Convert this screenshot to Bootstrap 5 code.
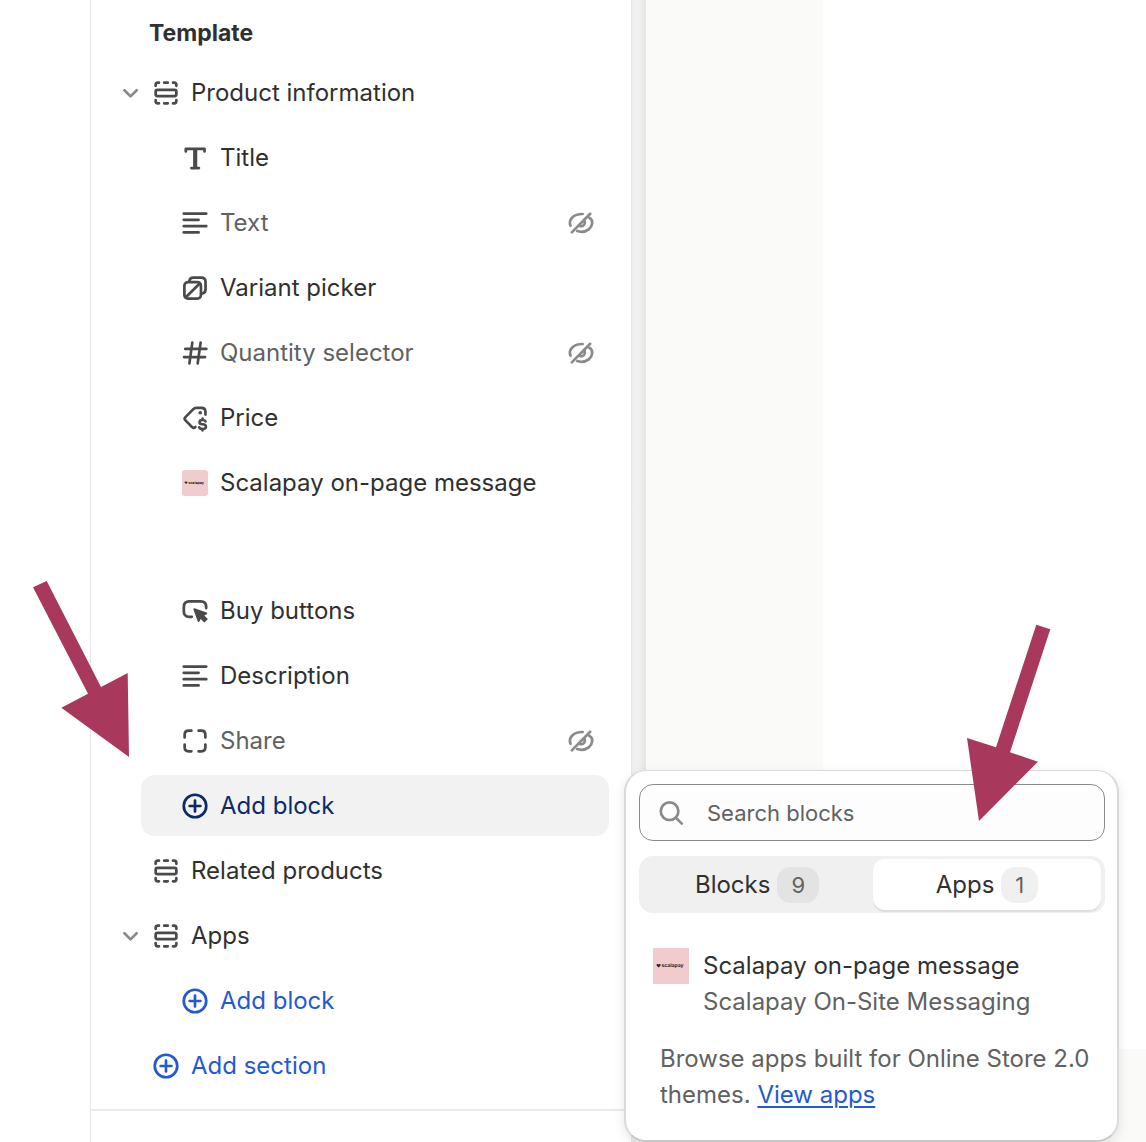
<!DOCTYPE html>
<html lang="en">
<head>
<meta charset="utf-8">
<meta name="viewport" content="width=device-width, initial-scale=1">
<title>Theme editor</title>
<link href="https://cdn.jsdelivr.net/npm/bootstrap@5.3.0/dist/css/bootstrap.min.css" rel="stylesheet">
<style>
  body { font-family: Inter, "Liberation Sans", sans-serif; font-size: 24px; line-height: 36px; color: #303030; background: #fff; }
  .editor { min-height: 100vh; }
  .rail { width: 90px; }
  .sidebar { width: 541px; border-left: 1px solid #e6e6e6; }
  .gutter { width: 15px; background: linear-gradient(90deg, #e6e6e6 0, #f0f0f0 2px, #f0f0f0 8px, #e4e4e4 100%); }
  .preview { background: #fafaf8; padding-left: 177px; }
  .preview-page { background: #fff; height: 1049px; }
  .tree { padding: 15px 22px 9px 21px; }
  .tree h2 { font-size: 23px; line-height: 36px; font-weight: 650; margin: 0 0 11px; padding-left: 37px; }
  .tree ul { margin: 0; padding: 0; list-style: none; }
  .tree-row { display: flex; align-items: center; height: 61px; margin-bottom: 4px; border-radius: 14px; }
  .tree-row button, .tab-item { border: 0; background: none; padding: 0; color: inherit; }
  .tree-row .entry { display: flex; align-items: center; gap: 7px; text-align: left; }
  .no-toggle { padding-left: 36px; }
  .child-row { margin-left: 29px; padding: 0 10px 0 36px; }
  .after-gap { margin-top: 67px; }
  .hidden-row { color: #616161; }
  .selected-row { background: #f2f2f2; }
  .ico { width: 36px; height: 36px; flex: none; display: block; fill: none; stroke: #4a4a4a; stroke-width: 1.5; stroke-linecap: round; stroke-linejoin: round; }
  .ico-soft { stroke: #8a8a8a; }
  .tree-row .add-link { color: #2459d3; }
  .selected-row .add-link { color: #0b2a66; }
  .add-link .ico { stroke: currentColor; }
  .app-logo { width: 36px; height: 36px; flex: none; display: block; }
  .app-logo-sm { width: 26px; height: 26px; margin: 0 5px; border-radius: 3px; }
  .divider { border-top: 2px solid #ebebeb; }
  .picker { left: 624px; top: 770px; width: 495px; padding: 12px 12px 27px 13px; background: #fff; border: 2px solid #dadada; border-top-width: 1px; border-bottom-color: #c8c8c8; border-radius: 22px; box-shadow: 0 4px 12px rgba(0,0,0,.1); }
  .picker-search { height: 57px; margin-top: 1px; padding: 0 13px; gap: 18px; border: 1px solid #8a8a8a; border-radius: 14px; background: #fdfdfd; }
  .picker-search input { border: 0; outline: 0; background: none; min-width: 0; padding: 0; font-size: 22px; color: #303030; }
  .picker-search input::placeholder { color: #616161; opacity: 1; }
  .tab-strip { margin-top: 15px; padding: 3px 4px; gap: 2px; background: #f0f0f0; border-radius: 14px; }
  .tab-item { flex: 1 1 0; height: 51px; display: flex; align-items: center; justify-content: center; gap: 7px; border-radius: 12px; }
  .tab-on { background: #fff; box-shadow: 0 2px 1px rgba(0,0,0,.08); }
  .tally { height: 36px; padding: 0 14px; border-radius: 14px; background: #e3e3e3; color: #616161; font-size: 22px; }
  .tab-on .tally { background: #f0f0f0; }
  .app-entry { margin: 35px 0 0 14px; gap: 14px; }
  .soft { color: #616161; }
  .browse { margin: 21px 0 0 21px; }
  .browse a { color: #2459d3; text-underline-offset: 3px; text-decoration-thickness: 2px; }
  .pointers { left: 0; top: 0; width: 1146px; height: 1142px; pointer-events: none; fill: #a9395c; }
</style>
<script src="https://cdn.jsdelivr.net/npm/bootstrap@5.3.0/dist/js/bootstrap.bundle.min.js"></script>
</head>
<body>
<svg class="d-none" aria-hidden="true">
  <symbol id="i-chevron" viewBox="0 0 20 20"><path d="M6.9 8.5l3.4 3.4 3.4-3.4"/></symbol>
  <symbol id="i-section" viewBox="0 0 20 20"><rect x="4.25" y="8.25" width="11.5" height="3.5" rx="1"/><path d="M4.25 6v-.5q0-1.25 1.25-1.25h.6M9 4.25h2M13.9 4.25h.6q1.25 0 1.25 1.25V6M4.25 14v.5q0 1.25 1.25 1.25h.6M9 15.75h2M13.9 15.75h.6q1.25 0 1.25-1.25V14"/></symbol>
  <symbol id="i-title" viewBox="0 0 20 20"><path d="M4.9 6.4V4.9h10.4V6.4M8 15.6h4.2"/><path stroke-width="2.3" stroke-linecap="butt" d="M10.1 5v10.6"/></symbol>
  <symbol id="i-text" viewBox="0 0 20 20"><path d="M3.75 4.75h12.5M3.75 8.25H12M3.75 11.75h12.5M3.75 15.25H12"/></symbol>
  <symbol id="i-variant" viewBox="0 0 20 20"><rect x="4.1" y="6.7" width="9.2" height="9.2" rx="2"/><path d="M6.9 6.4V6q.3-1.75 2-1.75h4.6q2.35 0 2.35 2.35v4.3q0 2-2 2.2M4.9 15.1l7.7-7.6"/></symbol>
  <symbol id="i-hash" viewBox="0 0 20 20"><path d="M4.6 7.75h11.7M3.9 12.25h11.7M8.5 4.25l-1.6 11.5M13.1 4.25l-1.6 11.5"/></symbol>
  <symbol id="i-price" viewBox="0 0 20 20"><path d="M10.2 15q-.9.9-1.9 0l-3.6-3.7q-.9-.9 0-1.8l4.2-4.3q.8-.8 1.9-.8h2.8q2.2 0 2.2 2.2v1.5"/><circle cx="12.9" cy="7.1" r="1" fill="#4a4a4a" stroke="none"/><path stroke-width="1.4" d="M15.9 11.9q-.4-.8-1.8-.8-1.6 0-1.6 1.2 0 1.1 1.7 1.2 1.9.1 1.9 1.4 0 1.2-1.9 1.2-1.5 0-1.9-1M14.2 10.3v.8M14.2 16.1v.8"/></symbol>
  <symbol id="i-buy" viewBox="0 0 20 20"><path d="M8.2 13.25H6.8q-3-.1-3-3V7.7q0-3.1 3-3.1h6.4q3 0 3 3v.8"/><path fill="#4a4a4a" stroke-width="1" d="M9.6 9l6.7 2.3-2 1 2.2 2.2-1.3 1.3-2.2-2.2-1 2z"/></symbol>
  <symbol id="i-share" viewBox="0 0 20 20"><path d="M4.25 8V6.5q0-2.25 2.25-2.25H8M12 4.25h1.5q2.25 0 2.25 2.25V8M15.75 12v1.5q0 2.25-2.25 2.25H12M8 15.75H6.5q-2.25 0-2.25-2.25V12"/></symbol>
  <symbol id="i-plus" viewBox="0 0 20 20"><circle cx="10" cy="10" r="6.25"/><path d="M10 7v6M7 10h6"/></symbol>
  <symbol id="i-off" viewBox="0 0 20 20"><path d="M4.9 15.2L15.1 4.9M4.2 11.5C2.8 8.3 5.6 5 10.9 5M14.7 7.2C16 8 16.4 9 16.2 10.2 15.9 12.9 13.4 14.9 10.3 14.9Q9 14.9 7.9 14.5M12 8.7C12.6 10.5 11.6 12 9.6 11.8"/></symbol>
  <symbol id="i-search" viewBox="0 0 20 20"><circle cx="9.2" cy="9" r="4.9"/><path d="M12.8 12.7l3.2 3.2"/></symbol>
  <symbol id="i-logo" viewBox="0 0 36 36"><rect width="36" height="36" fill="#f0cccf"/><path fill="#222" d="M5.6 19.4L3.6 17.4q-.3-1.6 1-1.4l1 .6 1-.6q1.4-.1 1 1.4z"/><text x="8.5" y="19.3" font-family="Inter, sans-serif" font-size="5" font-weight="700" fill="#222" text-rendering="geometricPrecision">scalapay</text></symbol>
</svg>

<div class="editor d-flex position-relative overflow-hidden">
  <div class="rail flex-shrink-0"></div>
  <aside class="sidebar flex-shrink-0">
    <nav class="tree" aria-label="Template sections">
      <h2>Template</h2>
      <ul>
        <li>
          <div class="tree-row"><button type="button" aria-label="Collapse Product information"><svg class="ico ico-soft"><use href="#i-chevron"/></svg></button><button type="button" class="entry"><svg class="ico"><use href="#i-section"/></svg>Product information</button></div>
          <ul>
            <li class="tree-row child-row"><button type="button" class="entry"><svg class="ico"><use href="#i-title"/></svg>Title</button></li>
            <li class="tree-row child-row hidden-row"><button type="button" class="entry"><svg class="ico"><use href="#i-text"/></svg>Text</button><button type="button" class="ms-auto" aria-label="Show Text"><svg class="ico ico-soft"><use href="#i-off"/></svg></button></li>
            <li class="tree-row child-row"><button type="button" class="entry"><svg class="ico"><use href="#i-variant"/></svg>Variant picker</button></li>
            <li class="tree-row child-row hidden-row"><button type="button" class="entry"><svg class="ico"><use href="#i-hash"/></svg>Quantity selector</button><button type="button" class="ms-auto" aria-label="Show Quantity selector"><svg class="ico ico-soft"><use href="#i-off"/></svg></button></li>
            <li class="tree-row child-row"><button type="button" class="entry"><svg class="ico"><use href="#i-price"/></svg>Price</button></li>
            <li class="tree-row child-row"><button type="button" class="entry"><svg class="app-logo app-logo-sm"><use href="#i-logo"/></svg>Scalapay on-page message</button></li>
            <li class="tree-row child-row after-gap"><button type="button" class="entry"><svg class="ico"><use href="#i-buy"/></svg>Buy buttons</button></li>
            <li class="tree-row child-row"><button type="button" class="entry"><svg class="ico"><use href="#i-text"/></svg>Description</button></li>
            <li class="tree-row child-row hidden-row"><button type="button" class="entry"><svg class="ico"><use href="#i-share"/></svg>Share</button><button type="button" class="ms-auto" aria-label="Show Share"><svg class="ico ico-soft"><use href="#i-off"/></svg></button></li>
            <li class="tree-row child-row selected-row"><button type="button" class="entry add-link"><svg class="ico"><use href="#i-plus"/></svg>Add block</button></li>
          </ul>
        </li>
        <li class="tree-row no-toggle"><button type="button" class="entry"><svg class="ico"><use href="#i-section"/></svg>Related products</button></li>
        <li>
          <div class="tree-row"><button type="button" aria-label="Collapse Apps"><svg class="ico ico-soft"><use href="#i-chevron"/></svg></button><button type="button" class="entry"><svg class="ico"><use href="#i-section"/></svg>Apps</button></div>
          <ul>
            <li class="tree-row child-row"><button type="button" class="entry add-link"><svg class="ico"><use href="#i-plus"/></svg>Add block</button></li>
          </ul>
        </li>
        <li class="tree-row no-toggle"><button type="button" class="entry add-link"><svg class="ico"><use href="#i-plus"/></svg>Add section</button></li>
      </ul>
    </nav>
    <div class="divider"></div>
  </aside>
  <div class="gutter flex-shrink-0"></div>
  <main class="preview flex-grow-1"><div class="preview-page"></div></main>

  <section class="picker position-absolute" aria-label="Add block">
    <div class="picker-search d-flex align-items-center">
      <svg class="ico ico-soft"><use href="#i-search"/></svg>
      <input type="search" class="flex-grow-1" placeholder="Search blocks" aria-label="Search blocks">
    </div>
    <div class="tab-strip d-flex" role="tablist">
      <button type="button" class="tab-item" role="tab" aria-selected="false">Blocks <span class="tally">9</span></button>
      <button type="button" class="tab-item tab-on" role="tab" aria-selected="true">Apps <span class="tally">1</span></button>
    </div>
    <div class="app-entry d-flex">
      <svg class="app-logo"><use href="#i-logo"/></svg>
      <div><div>Scalapay on-page message</div><div class="soft">Scalapay On-Site Messaging</div></div>
    </div>
    <p class="browse soft">Browse apps built for Online Store 2.0 themes. <a href="#">View apps</a></p>
  </section>

  <svg class="pointers position-absolute" viewBox="0 0 1146 1142" aria-hidden="true">
    <path d="M33 587.3L46.7 581 101 687l26.7-14L129 757 61.3 707.7 88 693.7z"/>
    <path d="M1036.3 624.7l14 4.6L1010 752.3l28 9.4L979 821l-12-83 29 9.3z"/>
  </svg>
</div>
</body>
</html>
